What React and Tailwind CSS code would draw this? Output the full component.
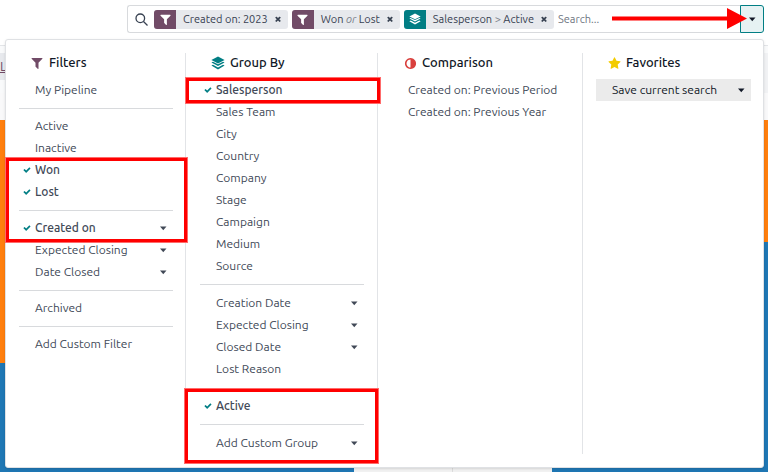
import { Fragment } from "react";

const FONT = "font-['Ubuntu','Noto_Sans',sans-serif]";

function Glyph({ d, className }) {
  return (
    <svg viewBox="0 0 1792 1792" fill="currentColor" aria-hidden="true" className={className}>
      <path d={d} />
    </svg>
  );
}

const FUNNEL =
  "M1595 295q17 41-14 70l-493 493v742q0 42-39 59-13 5-25 5-27 0-45-19l-256-256q-19-19-19-45v-486l-493-493q-31-29-14-70 17-39 59-39h1280q42 0 59 39z";
const ADJUST =
  "M896 1440v-1088q-148 0-273 73t-198 198-73 273 73 273 198 198 273 73zm768-544q0 209-103 385.5t-279.5 279.5-385.5 103-385.5-103-279.5-279.5-103-385.5 103-385.5 279.5-279.5 385.5-103 385.5 103 279.5 279.5 103 385.5z";
const CHECK =
  "M1671 566q0 40-28 68l-724 724-136 136q-28 28-68 28t-68-28l-136-136-362-362q-28-28-28-68t28-68l136-136q28-28 68-28t68 28l294 295 656-657q28-28 68-28t68 28l136 136q28 28 28 68z";
const STAR =
  "M1728 647q0 22-26 48l-363 354 86 500q1 7 1 20 0 21-10.5 35.5t-30.5 14.5q-19 0-40-12l-449-236-449 236q-22 12-40 12-21 0-31.5-14.5t-10.5-35.5q0-6 2-20l86-500-364-354q-25-27-25-48 0-37 56-46l502-73 225-455q19-41 49-41t49 41l225 455 502 73q56 9 56 46z";
const TIMES =
  "M1490 1322q0 40-28 68l-136 136q-28 28-68 28t-68-28l-294-294-294 294q-28 28-68 28t-68-28l-136-136q-28-28-28-68t28-68l294-294-294-294q-28-28-28-68t28-68l136-136q28-28 68-28t68 28l294 294 294-294q28-28 68-28t68 28l136 136q28 28 28 68t-28 68l-294 294 294 294q28 28 28 68z";

function Layers({ className }) {
  return (
    <svg viewBox="0 0 14 14" fill="currentColor" aria-hidden="true" className={className}>
      <path d="M7 .6 13.6 4 7 7.4.4 4z" />
      <path d="M.4 6.4 2 5.7 7 8.3l5-2.6 1.6.7L7 10z" />
      <path d="M.4 9.6 2 8.8l5 2.6 5-2.6 1.6.8L7 13.4z" />
    </svg>
  );
}

function Caret({ className }) {
  return (
    <svg viewBox="0 0 8 5" fill="currentColor" aria-hidden="true" className={className}>
      <path d="M1 .5h6.500L4.250 4.300z" />
    </svg>
  );
}

function Chip({ icon, tone, label, children }) {
  return (
    <div className="flex h-[19px] shrink-0 items-center overflow-hidden rounded-[3px] bg-[#e7e9ed] text-[#374151]">
      <span className={`flex h-full w-[22px] items-center justify-center text-white ${tone}`}>{icon}</span>
      <span className="pl-[7px] whitespace-pre">{children}</span>
      <button type="button" aria-label={`Remove ${label}`} className="flex h-full w-5 items-center justify-center">
        <Glyph d={TIMES} className="size-2" />
      </button>
    </div>
  );
}

function Entry({ label, active, caret }) {
  return (
    <button
      type="button"
      aria-pressed={active}
      className={`flex h-[22px] w-full items-center text-left whitespace-nowrap ${active ? "font-medium" : ""}`}
    >
      <span className="flex w-4 shrink-0 pl-1">{active && <Glyph d={CHECK} className="size-2 text-[#017e84]" />}</span>
      <span className="grow">{label}</span>
      {caret && <Caret className="mr-[6px] h-[5px] w-[8px]" />}
    </button>
  );
}

function Groups({ groups, divider }) {
  return groups.map((entries, i) => (
    <Fragment key={i}>
      {i > 0 && entries[0].ruled !== false && <hr className={`border-[#d8dadd] ${divider}`} />}
      {i > 0 && entries[0].ruled === false && <div className="h-[15px]" />}
      {entries.map((e) => (
        <Entry key={e.label} {...e} />
      ))}
    </Fragment>
  ));
}

function Heading({ icon, children }) {
  return (
    <h2 className="flex h-5 items-center gap-[5px] pl-[11px] text-[13px] font-medium text-[#111827]">
      <span className="flex w-[14px] justify-center">{icon}</span>
      {children}
    </h2>
  );
}

const FILTERS = [
  [{ label: "My Pipeline" }],
  [{ label: "Active" }, { label: "Inactive" }, { label: "Won", active: true }, { label: "Lost", active: true }],
  [
    { label: "Created on", active: true, caret: true },
    { label: "Expected Closing", caret: true },
    { label: "Date Closed", caret: true },
  ],
  [{ label: "Archived" }],
  [{ label: "Add Custom Filter" }],
];

const GROUPS = [
  [
    { label: "Salesperson", active: true },
    { label: "Sales Team" },
    { label: "City" },
    { label: "Country" },
    { label: "Company" },
    { label: "Stage" },
    { label: "Campaign" },
    { label: "Medium" },
    { label: "Source" },
  ],
  [
    { label: "Creation Date", caret: true },
    { label: "Expected Closing", caret: true },
    { label: "Closed Date", caret: true },
    { label: "Lost Reason" },
  ],
  [{ label: "Active", active: true, ruled: false }],
  [{ label: "Add Custom Group", caret: true }],
];

function Menu() {
  return (
    <div className="absolute top-[39px] right-[4px] left-[5px] grid grid-cols-[180fr_192fr_205fr_180fr] rounded-[3px] border border-[#dfe1e4] bg-white py-[13px] text-[12px] text-[#414957] shadow-sm">
      <section className="border-r border-[#e2e4e7] pr-3 pb-5 pl-[13px]">
        <Heading icon={<Glyph d={FUNNEL} className="size-[14px] text-[#714b67]" />}>Filters</Heading>
        <div className="pt-[6px]">
          <Groups groups={FILTERS} divider="mt-[7px] mb-[6px]" />
        </div>
      </section>
      <section className="border-r border-[#e2e4e7] pr-[13px] pl-[14px]">
        <Heading icon={<Layers className="size-[14px] text-[#017e84]" />}>Group By</Heading>
        <div className="pt-[6px]">
          <Groups groups={GROUPS} divider="my-[7px]" />
        </div>
      </section>
      <section className="border-r border-[#e2e4e7] pr-3 pl-[14px]">
        <Heading icon={<Glyph d={ADJUST} className="size-[13px] text-[#d9403d]" />}>Comparison</Heading>
        <div className="pt-[6px]">
          <Entry label="Created on: Previous Period" />
          <Entry label="Created on: Previous Year" />
        </div>
      </section>
      <section className="pr-3 pl-[13px]">
        <Heading icon={<Glyph d={STAR} className="size-[13px] text-[#f3cc00]" />}>Favorites</Heading>
        <div className="pt-[6px]">
          <button
            type="button"
            className="flex h-[22px] w-full items-center justify-between bg-[#ebebeb] pr-[6px] pl-4 whitespace-nowrap text-[#111827]"
          >
            Save current search
            <Caret className="h-[5px] w-[8px]" />
          </button>
        </div>
      </section>
    </div>
  );
}

function Highlight({ className }) {
  return <div className={`pointer-events-none absolute border-[3px] border-[#ff0000] ring-1 ring-[#ff6b6b] ${className}`} />;
}

export default function App() {
  return (
    <div className={`relative flex min-h-screen flex-col overflow-hidden bg-[#f9fafb] text-[11px] text-[#374151] ${FONT}`}>
      <header className="flex h-[46px] items-start border-b border-[#e3e5e8] bg-white pt-[5px] pr-[4px] pl-[127px]">
        <div className="flex h-[28px] min-w-0 grow items-center gap-[4px] rounded-l-[3px] border border-r-0 border-[#d8dadd] pl-[7px]">
          <svg viewBox="0 0 13 13" fill="none" stroke="#374151" strokeWidth="1.3" aria-hidden="true" className="mr-[2px] size-[13px] shrink-0">
            <circle cx="5.3" cy="5.3" r="4.3" />
            <path d="m8.5 8.5 4 4" />
          </svg>
          <Chip icon={<Glyph d={FUNNEL} className="size-[13px]" />} tone="bg-[#714b67]" label="Created on: 2023">
            Created on: 2023
          </Chip>
          <Chip icon={<Glyph d={FUNNEL} className="size-[13px]" />} tone="bg-[#714b67]" label="Won or Lost">
            Won <em className="text-[#7c818b]">or</em> Lost
          </Chip>
          <Chip icon={<Layers className="size-[12px]" />} tone="bg-[#017e84]" label="Salesperson > Active">
            Salesperson <span className="text-[#7c818b]">&gt;</span> Active
          </Chip>
          <input
            type="text"
            aria-label="Search"
            placeholder="Search..."
            className="w-0 min-w-0 grow bg-transparent outline-none placeholder:text-[#6f7682]"
          />
        </div>
        <button
          type="button"
          aria-label="Toggle search panel"
          className="flex h-[28px] w-[24px] shrink-0 items-center justify-center rounded-r-[3px] border border-[#017e84] bg-[#e6f2f3] text-[#111827]"
        >
          <Caret className="h-[5px] w-[8px]" />
        </button>
      </header>

      <div className="h-[7px] bg-[#f9fafb]" />
      <div className="flex h-[40px] justify-between">
        <div className="h-[27px] w-[60px] overflow-hidden bg-[#e7e9ed] pt-[4px] text-[13px] text-[#714b67] underline">Leads</div>
        <div className="w-[60px] bg-[#f1f2f4]" />
      </div>
      <div className="h-[27px] bg-[#f9f9fa]" />
      <main className="grid grow grid-cols-[354fr_198fr_216fr]">
        <div className="flex flex-col">
          <div className="h-[243px] bg-[#ff7f0e]" />
          <div className="grow bg-[#1f77b4]" />
        </div>
        <div className="grid grid-cols-2 bg-[#f2f2f2]">
          <div className="border-r border-[#dddddd]" />
        </div>
        <div className="flex flex-col">
          <div className="h-[122px] bg-[#ff7f0e]" />
          <div className="grow bg-[#1f77b4]" />
        </div>
      </main>

      <Menu />

      <Highlight className="top-[158px] left-[6px] h-[84px] w-[181px]" />
      <Highlight className="top-[78px] left-[186px] h-[25px] w-[194px]" />
      <Highlight className="top-[389px] left-[185px] h-[74px] w-[193px]" />
      <svg viewBox="0 0 136 22" aria-hidden="true" className="pointer-events-none absolute top-[8px] right-[20px] h-[22px] w-[136px]">
        <path d="M0 8.500h115v-8.500l20 10.500-20 10.500v-8.500H0z" fill="#ff0000" />
      </svg>
    </div>
  );
}
